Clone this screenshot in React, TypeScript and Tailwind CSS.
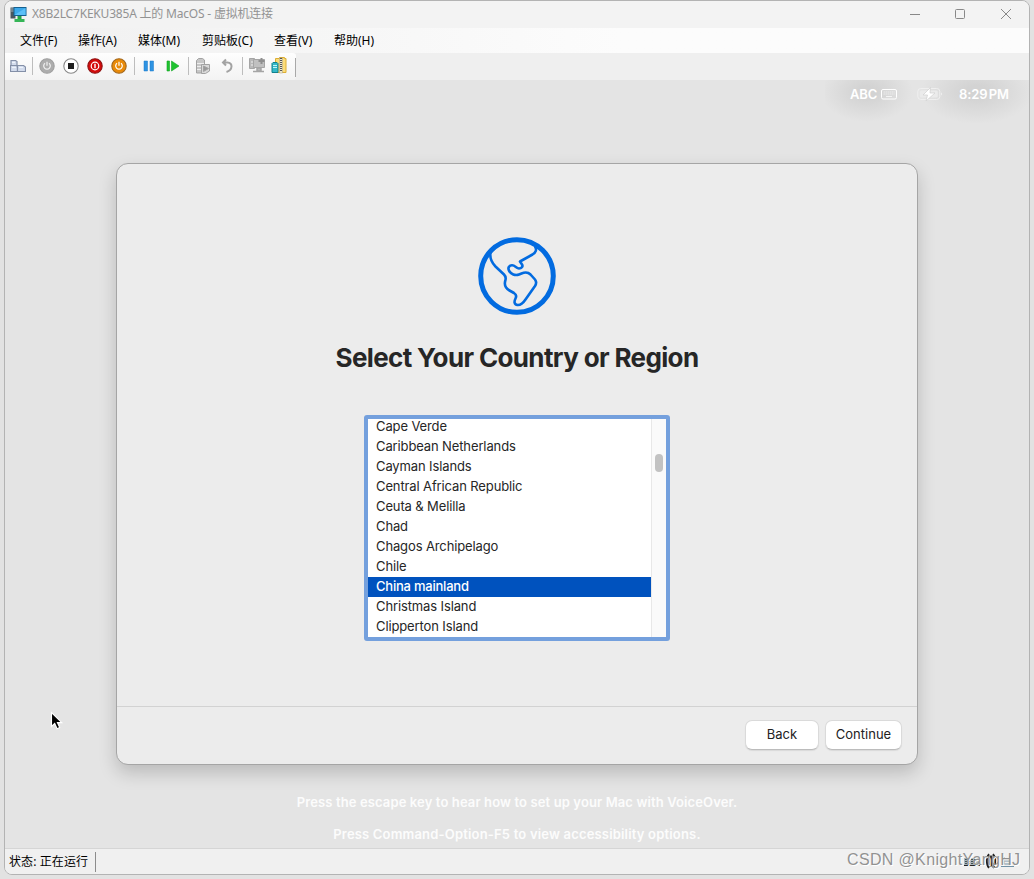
import type { ReactNode } from 'react';
import clsx from 'clsx';

const menus = [
  { label: '文件(F)', width: 'w-[58px]' },
  { label: '操作(A)', width: 'w-[60px]' },
  { label: '媒体(M)', width: 'w-[64px]' },
  { label: '剪贴板(C)', width: 'w-[72px]' },
  { label: '查看(V)', width: 'w-[60px]' },
  { label: '帮助(H)', width: 'w-[60px]' },
];

const countries = [
  'Cape Verde',
  'Caribbean Netherlands',
  'Cayman Islands',
  'Central African Republic',
  'Ceuta & Melilla',
  'Chad',
  'Chagos Archipelago',
  'Chile',
  'China mainland',
  'Christmas Island',
  'Clipperton Island',
];

const selected = 'China mainland';

function VmIcon() {
  return (
    <svg width="17" height="17" viewBox="0 0 17 17" className="shrink-0">
      <path d="M0.5 1.5h5v11h-5z" fill="#4b565e" />
      <path d="M1 3h3M1 5h3" stroke="#9fb0ba" />
      <path d="M3.5 1h13v9h-13z" fill="#14608f" />
      <path d="M4.5 2h11v7h-11z" fill="#3ba8ea" />
      <path d="M4.5 9l11-7v7z" fill="#5cc0f7" />
      <path d="M7.5 10h4v4h-4z" fill="#27a548" />
      <path d="M4.5 13h10v3h-10z" fill="#35b557" />
    </svg>
  );
}

function TitleBar() {
  return (
    <div className="flex h-[27px] shrink-0 items-center bg-[#f3f3f3] pb-[1px] pl-[5px]">
      <VmIcon />
      <span className="ml-[5px] whitespace-pre text-[12px] tracking-[-0.2px] text-[#929292]">
        X8B2LC7KEKU385A 上的 MacOS - 虚拟机连接
      </span>
      <div className="ml-auto flex items-center pr-[16px]">
        <svg width="104" height="14" viewBox="0 0 104 14" fill="none" stroke="#888">
          <path d="M1 7.5h10" />
          <rect x="46.5" y="2.5" width="9" height="9" rx="1" />
          <path d="M92 2l10 10M102 2l-10 10" />
        </svg>
      </div>
    </div>
  );
}

function MenuBar() {
  return (
    <div className="flex h-[25px] shrink-0 items-center bg-gradient-to-r from-[#f0f0f0] to-[#fcfcfc] to-60% pl-[15px] text-[12px] text-black">
      {menus.map((m) => (
        <span key={m.label} className={clsx('whitespace-nowrap', m.width)}>{m.label}</span>
      ))}
    </div>
  );
}

function Separator() {
  return <div className="mt-[1px] h-[18px] w-px bg-[#bdbdbd]" />;
}

function PowerButton({ fill, ring, glyph }: { fill: string; ring: string; glyph: ReactNode }) {
  return (
    <svg width="16" height="16" viewBox="0 0 16 16" fill="none">
      <circle cx="8" cy="8" r="7.2" fill={fill} stroke={ring} strokeWidth="1.1" />
      {glyph}
    </svg>
  );
}

function powerGlyph(color: string) {
  return <path d="M6 5.3a3.3 3.3 0 1 0 4 0M8 3.8v4" stroke={color} strokeWidth="1.2" />;
}

function Toolbar() {
  return (
    <div className="flex h-[27px] shrink-0 bg-[#efefef]">
      <div className="flex w-[291px] items-center rounded-r-[3px] bg-gradient-to-b from-[#fefefe] to-[#f3f3f3] pb-[2px] pl-[5px]">
        <svg width="16" height="14" viewBox="0 0 16 14" fill="#d3dced" stroke="#8490a8" strokeWidth="1.2">
          <path d="M1 1.5h4.500l1.500 1v4h-6z" />
          <path d="M0.500 6.500h6l1 1v5h-7z" />
          <path d="M7.500 6.500h6l2 1.500v4.500h-8z" />
          <path d="M2 3.500h3M2 8.500h4M9 8.500h4" stroke="#eef3fb" />
        </svg>
        <div className="ml-[6px]"><Separator /></div>
        <div className="ml-[6px] flex items-center gap-[8px]">
          <PowerButton fill="#adadad" ring="#9f9f9f" glyph={powerGlyph('#f2f2f2')} />
          <PowerButton fill="#fff" ring="#888" glyph={<path d="M5 5h6v6H5z" fill="#1d1d1d" />} />
          <PowerButton
            fill="#d40b0b"
            ring="#8e1010"
            glyph={<><circle cx="8" cy="8" r="3.8" stroke="#fff" strokeWidth="1.2" /><path d="M8 5.800v4.400" stroke="#fff" strokeWidth="1.400" /></>}
          />
          <PowerButton fill="#e98a08" ring="#a2661a" glyph={powerGlyph('#fff')} />
        </div>
        <div className="ml-[7px]"><Separator /></div>
        <svg className="ml-[8px]" width="12" height="12" viewBox="0 0 12 12">
          <path d="M1 1h3.500v10H1zM7 1h3.500v10H7z" fill="#2e93e2" stroke="#1b7bcb" strokeWidth="0.500" />
        </svg>
        <svg className="ml-[11px]" width="14" height="12" viewBox="0 0 14 12" fill="#1fc32f" stroke="#12a423" strokeWidth="0.600">
          <path d="M1 1h2.500v10H1zM5.500 1l7.500 5-7.500 5z" />
        </svg>
        <div className="ml-[8px]"><Separator /></div>
        <svg className="ml-[6px]" width="16" height="16" viewBox="0 0 16 16" fill="#c6c6c6" stroke="#a2a2a2">
          <path d="M1.500 2.500l2-2h4l2 1.500v13h-8z" />
          <path d="M2 5.500h7M2 8.500h6M2 11.500h5" stroke="#eee" />
          <path d="M6.500 6.500h8v6.500l-4 2.500h-4z" fill="#d8d8d8" />
          <path d="M8.500 8l5 2.500-5 3z" fill="#999" />
        </svg>
        <svg className="ml-[8px]" width="16" height="16" viewBox="0 0 16 16" fill="none" stroke="#a3a3a3">
          <path d="M7 1.500l-3 3 3 3M4.500 4.500h4c5.500 0 5.500 7.500-1 9.500" strokeWidth="2" />
        </svg>
        <div className="ml-[7px]"><Separator /></div>
        <svg className="ml-[6px]" width="17" height="17" viewBox="0 0 17 17" fill="#b9b9b9" stroke="#a5a5a5">
          <path d="M.5 1.500h5v10h-5z" />
          <path d="M4.500 2.500h11v8h-11z" fill="#c0c0c0" />
          <path d="M12.500 1v6M9.500 4h6" stroke="#8f8f8f" strokeWidth="2" />
          <path d="M8 11h4v3H8zM4 14.500h11" strokeWidth="1.500" />
          <path d="M2 5h2M2 8h2" stroke="#eee" />
        </svg>
        <svg className="ml-[5px]" width="17" height="17" viewBox="0 0 17 17">
          <path d="M4.500 1.500h4v-1h5v1h1.500v14h-10.500z" fill="#fbdc78" stroke="#dcae35" />
          <path d="M8.500 1h3v15h-3z" fill="#ece6ce" stroke="#a99d78" strokeWidth="0.500" />
          <path d="M10 1v14" stroke="#555" strokeWidth="2" strokeDasharray="1 1" />
          <path d="M1 6.500l1-1h4l1 1v9H1z" fill="#33b9c9" stroke="#12808d" />
          <path d="M2 8.500h4M2 10.500h4" stroke="#c2f5fa" />
        </svg>
        <div className="ml-auto h-[19px] w-px translate-y-[2px] bg-[#a8a8a8]" />
      </div>
    </div>
  );
}

function MacStatus() {
  return (
    <div className="absolute right-0 top-0 flex h-[44px] w-[204px] items-start bg-[radial-gradient(ellipse_46px_30px_at_42px_12px,#d3d3d3_20%,transparent),radial-gradient(ellipse_56px_32px_at_152px_12px,#d3d3d3_20%,transparent)] pl-[25px] pt-[4px] font-['Inter'] text-[13px] font-semibold leading-5 text-white">
      <span className="w-[31px] tracking-[-0.1px]">ABC</span>
      <svg className="mt-[5px]" width="16" height="11" viewBox="0 0 16 11" fill="none" stroke="#fff">
        <rect x="0.500" y="0.500" width="15" height="9.500" rx="1.500" />
        <path d="M2.500 3h11M2.500 5h11" strokeOpacity="0.500" strokeDasharray="1.500 0.500" />
        <path d="M5 7.500h6" strokeOpacity="0.700" />
      </svg>
      <svg className="ml-[20px] mt-[3px]" width="26" height="14" viewBox="0 0 26 14">
        <rect x="0.800" y="1.500" width="22" height="11" rx="3" fill="none" stroke="#efefef" />
        <rect x="2.800" y="3.500" width="18" height="7" rx="1.500" fill="#ebebeb" />
        <path d="M24 5.500c1.500.5 1.500 2.500 0 3z" fill="#eee" />
        <path d="M13.500.5L6 8h4.500l-1.500 6L18 6h-5z" fill="#fff" stroke="#d0d0d0" strokeWidth="0.700" />
      </svg>
      <span className="ml-[16px] whitespace-nowrap tracking-[-0.1px] [word-spacing:-2px]">8:29 PM</span>
    </div>
  );
}

function Globe() {
  return (
    <svg width="78" height="78" viewBox="11 10 78 78" fill="none" stroke="#026be0">
      <circle cx="50" cy="49" r="36.300" strokeWidth="5" />
      <path
        d="M23.500 25C22.500 31 25 36 28.500 39.500L37 47.500C40 50.500 38.500 52 38 55C37.300 59 39 61.500 42.500 63.500L47 66C49.500 67.500 49.500 69.500 48.500 71.500C47 74.500 47 77.500 50.500 78C54 78.300 56.500 75.500 58.500 72.500L68 59C69.600 56.500 69.500 54.500 68 52.500L63.500 47.500C61.500 45.500 57.500 45.300 54.500 46.500L52 47.500C48 49 44 47 42.200 44C40.300 40.800 42.300 38.500 45 38.300C48 38.200 49.500 41.500 52 41.500C54.500 41.500 56.300 39.500 55 37.500L53 34.500L65.500 27.500C69 25.300 70 22.500 68 19.500"
        strokeWidth="2.600"
        strokeLinejoin="round"
      />
    </svg>
  );
}

function CountryList() {
  return (
    <div className="mt-[38px] flex h-[226px] w-[306px] rounded-[3px] border-4 border-[#74a0dd] bg-white">
      <ul className="-mt-[2px] h-[220px] w-[283px] overflow-hidden text-[13px] leading-[18px] tracking-[-0.12px] text-[#262626]">
        {countries.map((c) => (
          <li
            key={c}
            className={clsx('h-5 whitespace-nowrap pl-2', c === selected && 'bg-[#0052be] font-medium tracking-[-0.22px] text-white')}
          >
            {c}
          </li>
        ))}
      </ul>
      <div className="flex-1 border-l border-[#e8e8e8] bg-[#fafafa] pl-[3px] pt-[35px]">
        <div className="h-[18px] w-[8px] rounded-full bg-[#c2c2c2]" />
      </div>
    </div>
  );
}

function SetupDialog() {
  return (
    <div className="mx-auto mt-[83px] flex h-[602px] w-[802px] shrink-0 flex-col rounded-[12px] border border-[#a5a5a5] bg-[#ececec] font-['Inter'] shadow-[0_8px_18px_rgba(0,0,0,0.18)]">
      <div className="flex flex-1 flex-col items-center pt-[73px]">
        <Globe />
        <h1 className="mt-[24px] whitespace-nowrap text-[26px] font-bold leading-[38px] tracking-[-0.64px] text-[#262626]">
          Select Your Country or Region
        </h1>
        <CountryList />
      </div>
      <div className="flex h-[58px] justify-end gap-[6px] border-t border-[#d2d2d2] pr-[15px] pt-[13px] text-[13px] text-[#222]">
        <button className="h-[30px] w-[74px] rounded-[7px] border border-[#dadada] border-b-[#bcbcbc] bg-white shadow-[0_1px_1px_rgba(0,0,0,0.08)]">
          Back
        </button>
        <button className="h-[30px] w-[77px] rounded-[7px] border border-[#dadada] border-b-[#bcbcbc] bg-white shadow-[0_1px_1px_rgba(0,0,0,0.08)]">
          Continue
        </button>
      </div>
    </div>
  );
}

function Pointer() {
  return (
    <svg className="absolute left-[45px] top-[631px]" width="14" height="20" viewBox="0 0 14 20">
      <path d="M1.500 1.500v14l3.200-3 2.400 5.300 2.600-1.200-2.300-5h4.400z" fill="#000" stroke="#fff" strokeWidth="1.100" />
    </svg>
  );
}

function MacScreen() {
  return (
    <div className="relative flex h-[768px] shrink-0 flex-col bg-[#e4e4e4]">
      <MacStatus />
      <SetupDialog />
      <Pointer />
      <div className="mt-[21px] text-center font-['Inter'] text-[13px] font-semibold leading-[32px] text-[#fcfcfc]">
        <p className="tracking-[0.12px]">Press the escape key to hear how to set up your Mac with VoiceOver.</p>
        <p className="tracking-[0.18px]">Press Command-Option-F5 to view accessibility options.</p>
      </div>
    </div>
  );
}

function StatusBar() {
  return (
    <div className="relative flex flex-1 items-center border-t border-[#d5d5d5] bg-[#f0f0f0] pl-[4px] text-[12px] text-black">
      <span className="w-[86px] whitespace-nowrap tracking-[0.1px]">状态: 正在运行</span>
      <div className="h-[20px] w-px bg-[#8c8c8c]" />
      <svg className="absolute left-[958px] top-[3px]" width="54" height="18" viewBox="0 0 54 18" fill="none">
        <path d="M1 6h15v7H1z" fill="#aab5bc" />
        <path d="M2 7.500h12M2 9.500h12M2 11.500h12" stroke="#455" strokeDasharray="2 1" />
        <path d="M1 13.500h16" stroke="#222" />
        <path d="M24 3h8v12h-8z" fill="#999" />
        <path d="M26 2c-3 3-3 11 0 14M30 2c3 3 3 11 0 14M28 4v10" stroke="#222" strokeWidth="1.700" />
        <path d="M38 14.500h13M41 5v7h6V4M41 9h7" stroke="#7292a6" />
      </svg>
      <span className="absolute left-[842px] top-[-1px] whitespace-nowrap font-['Liberation_Sans'] text-[16px] leading-[24px] tracking-[0.35px] text-[#929292] [text-shadow:1px_1px_0_#fff]">
        CSDN @KnightYangHJ
      </span>
    </div>
  );
}

export default function App() {
  return (
    <div className="h-[879px] w-[1034px] overflow-hidden bg-[#e2e2e2] pl-[4px] font-['Noto_Sans','Noto_Sans_CJK_SC',sans-serif]">
      <div className="flex h-[875px] w-[1026px] flex-col overflow-hidden rounded-[8px] border border-[#b3b3b3] bg-[#f0f0f0]">
        <TitleBar />
        <MenuBar />
        <Toolbar />
        <MacScreen />
        <StatusBar />
      </div>
    </div>
  );
}
